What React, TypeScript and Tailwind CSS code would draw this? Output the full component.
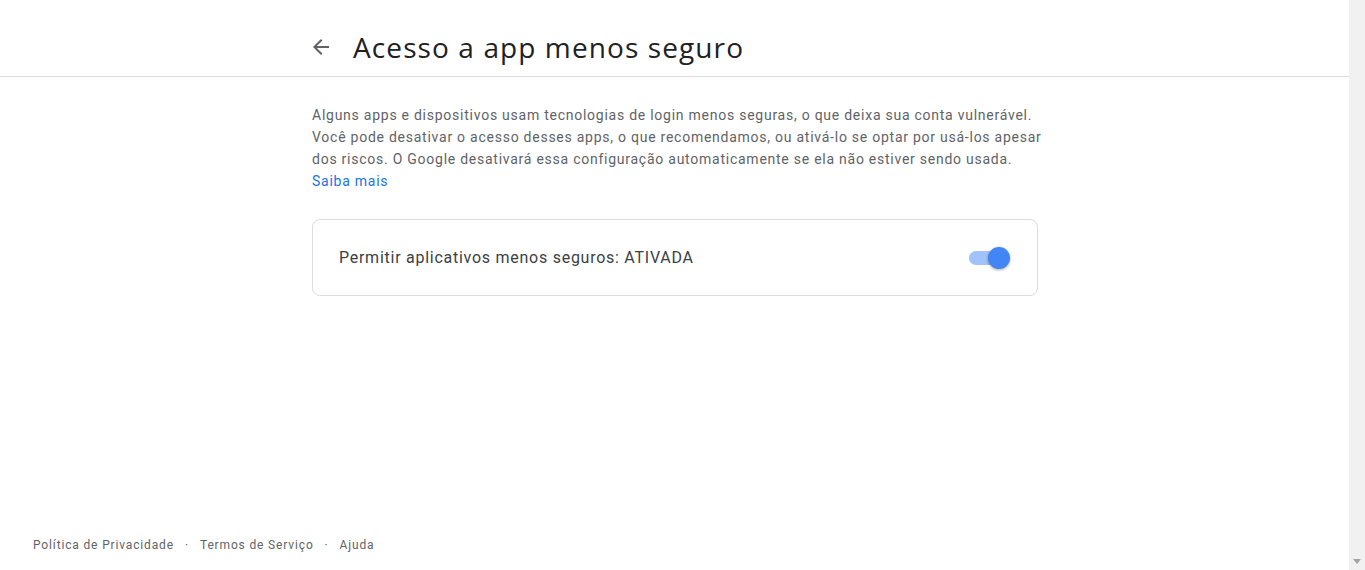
import React, { useState } from 'react';

export default function App() {
  const [enabled, setEnabled] = useState(true);

  return (
    <div className="flex h-[570px] w-full overflow-hidden bg-white font-['Roboto',sans-serif]">
      <div className="flex min-w-0 flex-1 flex-col">
        <header className="h-[77px] shrink-0 border-b border-[#dadce0]">
          <div className="ml-[305px] flex h-full items-center pt-[17px]">
            <button className="flex h-8 w-8 items-center justify-center text-[#5f6368]">
              <svg width="24" height="24" viewBox="0 0 24 24" fill="currentColor">
                <path d="M20 11H7.83l5.59-5.59L12 4l-8 8 8 8 1.41-1.41L7.83 13H20v-2z" />
              </svg>
            </button>
            <h1 className="ml-[16px] text-[28px] font-normal text-[#202124] font-['Open_Sans',sans-serif] tracking-[1.1px]">
              Acesso a app menos seguro
            </h1>
          </div>
        </header>

        <main className="ml-[312px] w-[726px] pt-[27px]">
          <p className="whitespace-nowrap text-[14px] leading-[22px] tracking-[0.75px] text-[#5f6368]">
            Alguns apps e dispositivos usam tecnologias de login menos seguras, o que deixa sua conta vulnerável.
            <br />
            Você pode desativar o acesso desses apps, o que recomendamos, ou ativá-lo se optar por usá-los apesar
            <br />
            dos riscos. O Google desativará essa configuração automaticamente se ela não estiver sendo usada.
            <br />
            <a className="text-[#1a73e8]" href="#">
              Saiba mais
            </a>
          </p>

          <div className="mt-[27px] flex h-[77px] items-center justify-between rounded-lg border border-[#dadce0] pl-[26px] pr-[26px]">
            <span className="text-[16px] tracking-[0.74px] text-[#3c4043]">
              Permitir aplicativos menos seguros: ATIVADA
            </span>
            <button
              onClick={() => setEnabled(!enabled)}
              className="relative flex h-[22px] w-[42px] items-center"
            >
              <span
                className={`h-[14px] w-[36px] rounded-full ${enabled ? 'bg-[#a1c2fa]' : 'bg-[#bdc1c6]'}`}
              />
              <span
                className={`absolute top-0 h-[22px] w-[22px] rounded-full shadow-[0_1px_3px_rgba(0,0,0,0.35)] ${
                  enabled ? 'left-[19px] bg-[#4285f4]' : 'left-0 bg-white'
                }`}
              />
            </button>
          </div>
        </main>

        <footer className="mt-auto flex items-center pb-[16px] pl-[33px] text-[12px] tracking-[0.85px] text-[#5f6368]">
          <a href="#">Política de Privacidade</a>
          <span className="mx-[11px]">·</span>
          <a href="#">Termos de Serviço</a>
          <span className="mx-[11px]">·</span>
          <a href="#">Ajuda</a>
        </footer>
      </div>

      <div className="flex w-[16px] shrink-0 flex-col justify-end bg-[#f1f1f1]">
        <div className="flex h-[17px] items-center justify-center">
          <svg width="8" height="5" viewBox="0 0 8 5" fill="#a3a3a3">
            <path d="M0 0h8L4 5z" />
          </svg>
        </div>
      </div>
    </div>
  );
}
